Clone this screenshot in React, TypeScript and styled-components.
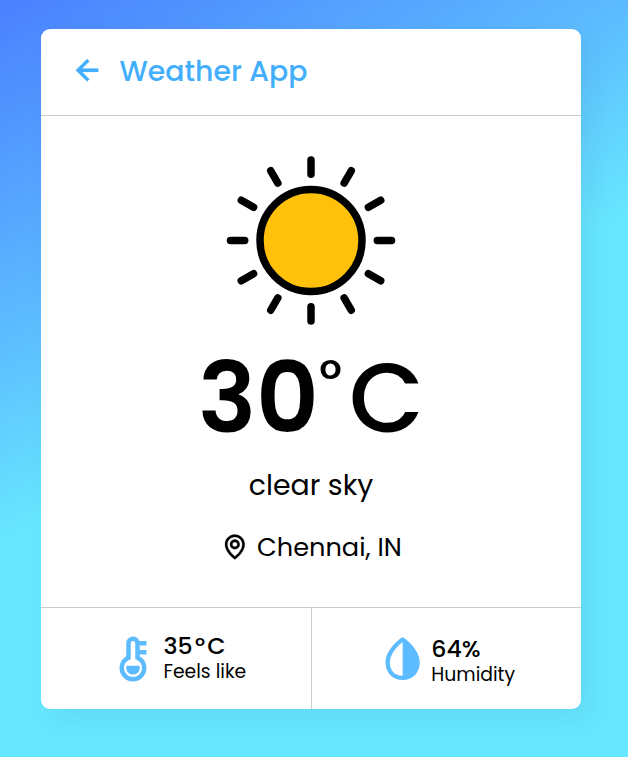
import React from "react";
import styled, { createGlobalStyle } from "styled-components";
import { BiLeftArrowAlt, BiMap, BiSolidDropletHalf, BiSolidThermometer } from "react-icons/bi";

const GlobalStyle = createGlobalStyle`
  * { box-sizing: border-box; margin: 0; padding: 0; }
  body { font-family: Poppins, Inter, "Liberation Sans", sans-serif; color: #000; }
`;

const Page = styled.div`
  height: 757px;
  padding: 29px 47px 0 41px;
  background: linear-gradient(152.4deg, #4a80ff 0%, #5bb8ff 29%, #67e6ff 49.8%, #67e6ff 100%);
`;

const Card = styled.main`
  display: flex;
  flex-direction: column;
  height: 680px;
  background: #fff;
  border-radius: 9px;
  box-shadow: 9.5px 9.5px 27px rgba(0, 0, 0, 0.05);
`;

const Header = styled.header`
  display: flex;
  align-items: center;
  height: 87px;
  padding-left: 27px;
  border-bottom: 1px solid #ccc;
  color: #43affc;
  svg { flex: none; margin-bottom: 3px; stroke-width: 0.1; }
`;

const Text = styled.span<{ $size: number; $weight?: number; $line?: number }>`
  display: block;
  font-size: ${(p) => p.$size}px;
  font-weight: ${(p) => p.$weight ?? 400};
  line-height: ${(p) => p.$line ?? 40}px;
  white-space: nowrap;
`;

const Title = styled(Text).attrs({ as: "h1" })`
  margin: 0 0 2px 11px;
`;

const Weather = styled.section`
  display: flex;
  flex-direction: column;
  align-items: center;
  flex: 1;
  padding-top: 38px;
`;

const Temperature = styled.div`
  display: flex;
  align-items: flex-start;
  height: 110px;
  margin-top: 17px;
  line-height: 110px;
  font-size: 97.2px;
  font-weight: 500;
`;

const Value = styled.span`
  font-weight: 600;
`;

const Degree = styled.span`
  margin: 0 7px 0 0;
  font-size: 54px;
  line-height: 72px;
`;

const Location = styled.div`
  display: flex;
  align-items: center;
  gap: 7px;
  margin-top: 11px;
  svg { flex: none; stroke-width: 0.2; }
`;

const Footer = styled.footer`
  display: grid;
  grid-template-columns: 271px 1fr;
  height: 102px;
  border-top: 1px solid #ccc;
`;

const Detail = styled.div<{ $inset: number; $gap: number }>`
  display: flex;
  align-items: center;
  gap: ${(p) => p.$gap}px;
  padding-left: ${(p) => p.$inset}px;
  &:first-child { border-right: 1px solid #ccc; }
  svg { flex: none; color: #5dbbff; }
`;

const Reading = styled.div<{ $drop?: number }>`
  padding-top: ${(p) => p.$drop ?? 0}px;
`;

const SmallDegree = styled.span`
  margin: 0 2.2px;
`;

const SunIcon = () => (
  <svg width="170" height="172" viewBox="-85 -86.5 170 172" fill="none" stroke="#000" strokeWidth="7.5" strokeLinecap="round">
    <circle r="51" fill="#ffc10a" />
    {Array.from({ length: 12 }, (_, i) => (
      <line key={i} y1="-66.3" y2="-80.5" transform={`rotate(${i * 30})`} />
    ))}
  </svg>
);

export default function App() {
  return (
    <>
      <GlobalStyle />
      <Page>
        <Card>
          <Header>
            <BiLeftArrowAlt size={40.5} />
            <Title $size={28.35} $weight={500}>Weather App</Title>
          </Header>
          <Weather>
            <SunIcon />
            <Temperature>
              <Value>30</Value>
              <Degree>°</Degree>
              <span>C</span>
            </Temperature>
            <Text $size={28.35} $line={64}>clear sky</Text>
            <Location>
              <BiMap size={29.7} />
              <Text $size={25.65} $line={38}>Chennai, IN</Text>
            </Location>
          </Weather>
          <Footer>
            <Detail $inset={64.5} $gap={4}>
              <BiSolidThermometer size={54} />
              <Reading>
                <Text $size={23.7} $weight={500} $line={26}>
                  35<SmallDegree>°</SmallDegree>C
                </Text>
                <Text $size={18.8} $line={25}>Feels like</Text>
              </Reading>
            </Detail>
            <Detail $inset={65} $gap={3}>
              <BiSolidDropletHalf size={51.3} />
              <Reading $drop={6}>
                <Text $size={23.7} $weight={500} $line={26}>64%</Text>
                <Text $size={18.8} $line={26}>Humidity</Text>
              </Reading>
            </Detail>
          </Footer>
        </Card>
      </Page>
    </>
  );
}
